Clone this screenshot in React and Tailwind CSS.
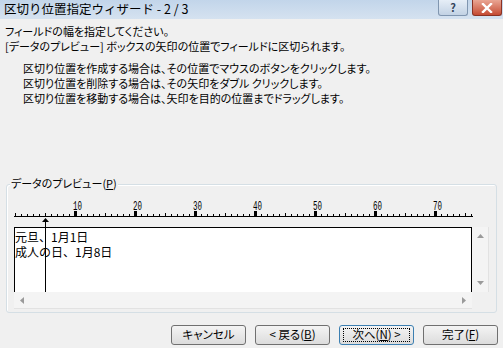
import React from 'react';

const ui = "font-['Noto_Sans_CJK_JP',sans-serif]";

// ルーラー（6px = 1文字）
const Ruler = () => {
    const ticks = [];
    for (let i = 0; i <= 76; i++) {
        const x = 1 + 6 * i;
        if (i % 10 === 0 && i > 0) {
            ticks.push(<rect key={i} x={x - 1} y={13} width={3} height={5} fill="#000" />);
            ticks.push(
                <text key={'t' + i} x={x - 2} y={12} fontSize="13" fontFamily="Liberation Mono, monospace" textLength="9" lengthAdjust="spacingAndGlyphs" fill="#000">
                    {i}
                </text>
            );
        } else if (i % 5 === 0) {
            ticks.push(<rect key={i} x={x} y={15} width={1} height={3} fill="#000" />);
        } else {
            ticks.push(<rect key={i} x={x} y={16} width={1} height={2} fill="#000" />);
        }
    }
    return (
        <svg width="460" height="29" className="block">
            <rect x={0} y={18} width={459} height={1} fill="#000" />
            {ticks}
        </svg>
    );
};

const Btn = ({ children, focused }) => (
    <button
        className={`w-[75px] h-[20px] rounded-[3px] border text-[11.5px] leading-none flex items-center justify-center bg-gradient-to-b from-[#f4f4f4] to-[#dcdcdc] text-black [font-feature-settings:'palt'] ${focused ? 'border-[#3c7fb1]' : 'border-[#707070]'}`}
    >
        {focused ? (
            <span className="w-[67px] h-[14px] flex items-center justify-center border border-dotted border-black">{children}</span>
        ) : children}
    </button>
);

const App = () => {
    return (
        <div className={`w-[503px] h-[348px] bg-[#f0f0f0] overflow-hidden flex flex-col text-black ${ui}`}>
            {/* タイトルバー */}
            <div className="h-[19px] bg-gradient-to-b from-[#c2d5ea] to-[#d5e2f0] flex items-center pl-[4px] relative">
                <span className="text-[12.5px] leading-none text-[#000]">区切り位置指定ウィザード - 2 / 3</span>
                <div className="ml-auto flex items-start self-start gap-[4px] pr-[1px]">
                    <div className="w-[30px] h-[16px] rounded-b-[3px] border border-t-0 border-[#8096b0] bg-gradient-to-b from-[#e6eef7] to-[#c2d2e4] flex items-center justify-center text-[11px] leading-none text-[#33445a] font-bold">?</div>
                    <div className="w-[30px] h-[16px] rounded-b-[3px] border border-t-0 border-[#8a3224] bg-gradient-to-b from-[#e9a593] to-[#c44a33] flex items-center justify-center">
                        <svg width="12" height="10" viewBox="0 0 12 10">
                            <path d="M2 1 L10 9 M10 1 L2 9" stroke="#fff" strokeWidth="2.4" strokeLinecap="square" />
                        </svg>
                    </div>
                </div>
            </div>

            {/* 説明 */}
            <div className="pl-[5px] pt-[5px] text-[11px] leading-[15px] [font-feature-settings:'palt']">
                <p>フィールドの幅を指定してください。</p>
                <p>[データのプレビュー] ボックスの矢印の位置でフィールドに区切られます。</p>
                <div className="pl-[18px] mt-[7px]">
                    <p>区切り位置を作成する場合は、その位置でマウスのボタンをクリックします。</p>
                    <p>区切り位置を削除する場合は、その矢印をダブル クリックします。</p>
                    <p>区切り位置を移動する場合は、矢印を目的の位置までドラッグします。</p>
                </div>
            </div>

            {/* データのプレビュー */}
            <div className="relative mx-[6px] mt-[78px] h-[129px] border border-[#d5dfe5] rounded-[3px] shadow-[inset_1px_1px_0_#fff]">
                <span className="absolute left-[3px] -top-[9px] px-[1px] bg-[#f0f0f0] text-[11px] leading-[15px] [font-feature-settings:'palt']">
                    データのプレビュー(<span className="underline">P</span>)
                </span>
                <div className="relative ml-[7px] mt-[13px] w-[475px]">
                    <Ruler />
                    <div className="flex">
                        <div className="w-[459px] h-[65px] bg-white border-t border-l border-r border-black pt-[1px] text-[12px] leading-[15px]">
                            <p>元旦、1月1日</p>
                            <p>成人の日、1月8日</p>
                        </div>
                        <div className="w-[17px] h-[65px] bg-[#f4f4f4] border-r border-[#e2e2e2] flex flex-col items-center justify-between py-[7px]">
                            <svg width="7" height="4"><path d="M0 4 L3.5 0 L7 4 Z" fill="#9a9a9a" /></svg>
                            <svg width="7" height="4"><path d="M0 0 L3.5 4 L7 0 Z" fill="#9a9a9a" /></svg>
                        </div>
                    </div>
                    <div className="flex">
                        <div className="w-[459px] h-[17px] bg-[#f4f4f4] border-b border-[#e2e2e2] flex items-center justify-between px-[6px]">
                            <svg width="4" height="7"><path d="M4 0 L0 3.5 L4 7 Z" fill="#9a9a9a" /></svg>
                            <svg width="4" height="7"><path d="M0 0 L4 3.5 L0 7 Z" fill="#9a9a9a" /></svg>
                        </div>
                        <div className="w-[17px] h-[17px] bg-[#f0f0f0]" />
                    </div>
                    {/* 区切り矢印 */}
                    <div className="absolute left-[28px] top-[20px] flex flex-col items-center">
                        <svg width="7" height="4" className="block"><path d="M0 4 L3.5 0 L7 4 Z" fill="#000" /></svg>
                        <div className="w-[1px] h-[70px] bg-black" />
                    </div>
                </div>
            </div>

            {/* ボタン */}
            <div className="flex justify-end gap-[9px] pr-[5px] mt-[12px]">
                <Btn>キャンセル</Btn>
                <Btn>&lt; 戻る(<span className="underline">B</span>)</Btn>
                <Btn focused>次へ(<span className="underline">N</span>) &gt;</Btn>
                <Btn>完了(<span className="underline">F</span>)</Btn>
            </div>
        </div>
    );
};

export default App;
